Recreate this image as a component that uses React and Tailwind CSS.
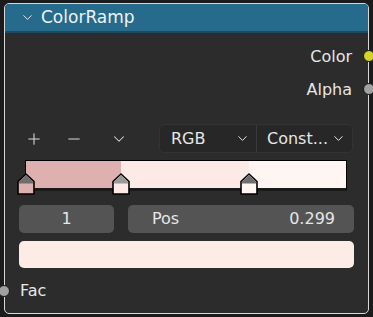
import { ChevronDown, Plus, Minus } from 'lucide-react';

function Stop({ left, fill, roof }) {
  return (
    <svg
      className="absolute top-[13px]"
      style={{ left: left - 9 }}
      width="18"
      height="22"
      viewBox="0 0 18 22"
    >
      <path d="M1 8.5 L9 1 L17 8.5 L17 21 L1 21 Z" fill={fill} stroke="#000" strokeWidth="1.6" strokeLinejoin="round" />
      <path d="M1.9 8.8 L9 2.2 L16.1 8.8 L16.1 10.5 L1.9 10.5 Z" fill={roof} />
    </svg>
  );
}

function Socket({ color, className }) {
  return (
    <span
      className={`absolute w-[12px] h-[12px] rounded-full border border-[#1a1a1a] ${className}`}
      style={{ background: color }}
    />
  );
}

export default function App() {
  return (
    <div className="w-[373px] h-[317px] bg-[#1b1b1b] pt-[3px] pl-[4px] font-['DejaVu_Sans',sans-serif] text-[#e6e6e6]">
      <div className="relative w-[365px] h-[311px] rounded-[5px] border border-[#d8d8d8] bg-[#2c2c2c]">
        {/* header */}
        <div className="h-[29px] rounded-t-[4px] bg-[#266b8c] border-b-2 border-[#1d4a60] flex items-center pl-[15px] gap-[6px]">
          <ChevronDown size={15} strokeWidth={1.5} className="text-[#e8eef2]" />
          <span className="text-[17px] text-[#eef3f6] leading-none">ColorRamp</span>
        </div>

        {/* outputs */}
        <div className="relative h-[33px] mt-[7px] flex items-center justify-end pr-[16px] text-[16px]">
          Color
          <Socket color="#d6d22a" className="right-[-7px] top-[10px]" />
        </div>
        <div className="relative h-[33px] flex items-center justify-end pr-[16px] text-[16px]">
          Alpha
          <Socket color="#a1a1a1" className="right-[-7px] top-[10px]" />
        </div>

        {/* toolbar */}
        <div className="mt-[18px] flex items-center h-[29px] pl-[20px] pr-[15px]">
          <div className="flex items-center gap-[22px] text-[#dcdcdc]">
            <Plus size={18} strokeWidth={1.4} />
            <Minus size={18} strokeWidth={1.4} />
            <ChevronDown size={18} strokeWidth={1.4} className="ml-[5px]" />
          </div>
          <div className="ml-auto flex h-[29px] w-[194px] rounded-[5px] bg-[#272727] border border-[#333] text-[16px]">
            <div className="flex-1 flex items-center justify-between pl-[11px] pr-[6px] border-r border-[#3a3a3a]">
              RGB
              <ChevronDown size={15} strokeWidth={1.6} />
            </div>
            <div className="flex-1 flex items-center justify-between pl-[10px] pr-[6px]">
              Const...
              <ChevronDown size={15} strokeWidth={1.6} />
            </div>
          </div>
        </div>

        {/* ramp */}
        <div className="relative mt-[7px] ml-[20px] w-[322px] h-[37px]">
          <div className="flex h-[31px] border border-black border-b-[3px] border-b-[#1a1a1a]">
            <div className="w-[95px] bg-[#dfb0b0]" />
            <div className="w-[128px] bg-[#fde9e5]" />
            <div className="flex-1 bg-[#fff5f3]" />
          </div>
          <Stop left={1} fill="#dfb0b0" roof="#6e6e6e" />
          <Stop left={96} fill="#fde9e5" roof="#9a9a9a" />
          <Stop left={224} fill="#fff5f3" roof="#6e6e6e" />
        </div>

        {/* fields */}
        <div className="mt-[8px] flex gap-[14px] px-[14px] text-[16px]">
          <div className="w-[95px] h-[28px] rounded-[5px] bg-[#545454] flex items-center justify-center">1</div>
          <div className="flex-1 h-[28px] rounded-[5px] bg-[#545454] flex items-center justify-between pl-[24px] pr-[19px]">
            <span>Pos</span>
            <span>0.299</span>
          </div>
        </div>

        {/* color swatch */}
        <div className="mt-[8px] mx-[14px] h-[27px] rounded-[5px] bg-[#fdebe6]" />

        {/* input */}
        <div className="relative mt-[8px] h-[30px] flex items-center pl-[15px] text-[16px]">
          Fac
          <Socket color="#a1a1a1" className="left-[-7px] top-[9px]" />
        </div>
      </div>
    </div>
  );
}
